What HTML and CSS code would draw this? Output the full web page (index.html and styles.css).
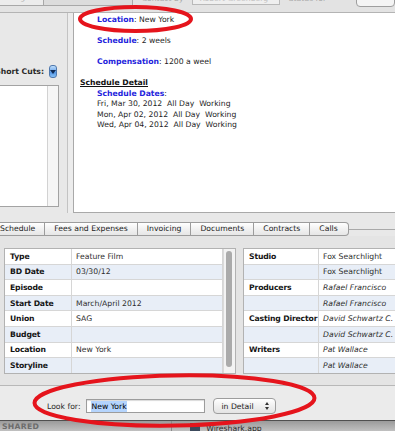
FILE: index.html
```html
<!DOCTYPE html>
<html lang="en">

<head>
    <meta charset="UTF-8">
    <meta name="viewport" content="width=device-width, initial-scale=1.0">
    <title>Job Detail</title>
    <link rel="stylesheet" href="styles.css">
</head>

<body>
    <div class="window">
        <div class="topbar">
            <div class="tb-seg">Budgets</div>
            <div class="tb-seg wide"></div>
            <div class="tb-label">Contact by</div>
            <div class="tb-field">Robert Greenberg</div>
            <div class="tb-label">Status for</div>
            <div class="tb-button"></div>
        </div>

        <div class="upper">
            <div class="sidebar">
                <div class="shortcuts">
                    <span>Short Cuts:</span>
                    <span class="popbtn"><i></i></span>
                </div>
                <div class="listbox">
                    <div class="list"></div>
                    <div class="vscroll"></div>
                </div>
            </div>
            <div class="splitter"></div>
            <div class="detail">
                <p class="item"><b>Location</b>: New York</p>
                <p class="item"><b>Schedule</b>: 2 weels</p>
                <p class="item last"><b>Compensation</b>: 1200 a weel</p>
                <p class="head">Schedule Detail</p>
                <p class="sub"><b>Schedule Dates</b>:</p>
                <p class="date">Fri, Mar 30, 2012  All Day  Working</p>
                <p class="date">Mon, Apr 02, 2012  All Day  Working</p>
                <p class="date">Wed, Apr 04, 2012  All Day  Working</p>
            </div>
        </div>

        <div class="tabs">
            <span class="tab first">Schedule</span>
            <span class="tab">Fees and Expenses</span>
            <span class="tab">Invoicing</span>
            <span class="tab">Documents</span>
            <span class="tab">Contracts</span>
            <span class="tab last">Calls</span>
            <span class="tabs-line"></span>
        </div>

        <div class="pane">
            <div class="grid left">
                <table>
                    <tr><th>Type</th><td>Feature Film</td></tr>
                    <tr><th>BD Date</th><td>03/30/12</td></tr>
                    <tr><th>Episode</th><td></td></tr>
                    <tr><th>Start Date</th><td>March/April 2012</td></tr>
                    <tr><th>Union</th><td>SAG</td></tr>
                    <tr><th>Budget</th><td></td></tr>
                    <tr><th>Location</th><td>New York</td></tr>
                    <tr><th>Storyline</th><td></td></tr>
                </table>
                <div class="scroll"><div class="thumb"></div></div>
            </div>
            <div class="grid right">
                <table>
                    <tr><th>Studio</th><td>Fox Searchlight</td></tr>
                    <tr><th></th><td>Fox Searchlight</td></tr>
                    <tr><th>Producers</th><td class="it">Rafael Francisco</td></tr>
                    <tr><th></th><td class="it">Rafael Francisco</td></tr>
                    <tr><th>Casting Director</th><td class="it">David Schwartz C.</td></tr>
                    <tr><th></th><td class="it">David Schwartz C.</td></tr>
                    <tr><th>Writers</th><td class="it">Pat Wallace</td></tr>
                    <tr><th></th><td class="it">Pat Wallace</td></tr>
                </table>
            </div>
        </div>

        <div class="findbar">
            <span class="find-label">Look for:</span>
            <span class="find-input"><span class="sel">New York</span></span>
            <span class="find-select">in Detail<i class="arrows"></i></span>
        </div>

        <div class="desk">
            <span class="desk-head">SHARED</span>
            <span class="desk-div"></span>
            <span class="desk-icon"></span>
            <span class="desk-name">Wireshark.app</span>
        </div>

        <svg class="marks" width="395" height="431" viewBox="0 0 395 431">
            <ellipse cx="135.5" cy="19" rx="55.5" ry="12" />
            <ellipse cx="174.5" cy="400.5" rx="140" ry="25" transform="rotate(-1 174.5 400.5)" stroke-width="5" />
        </svg>
    </div>
</body>

</html>
```

FILE: styles.css
```css
body {
    margin: 0px;
    font-family: "DejaVu Sans", sans-serif;
    font-size: 7.7px;
    color: #1e1e1e;
}

.window {
    position: relative;
    width: 395px;
    height: 431px;
    overflow: hidden;
    background-color: #e8e8e8;
}

/* top strip, mostly cut off */

.topbar {
    display: flex;
    align-items: flex-start;
    height: 12px;
    overflow: hidden;
    border-bottom: 1px solid #b4b4b4;
    background-color: #e3e3e3;
    white-space: nowrap;
}

.tb-seg {
    width: 48px;
    height: 14px;
    margin: -10px 0px 0px -2px;
    border: 1px solid #a8a8a8;
    background-color: #ececec;
    color: #b0b0b0;
    line-height: 14px;
    text-align: center;
}

.tb-seg.wide {
    width: 95px;
    margin-left: -1px;
    background-color: #dcdcdc;
}

.tb-label {
    margin: -6px 0px 0px 9px;
    color: #a9a9a9;
}

.tb-field {
    width: 94px;
    height: 14px;
    margin: -9px 0px 0px 9px;
    border: 1px solid #b9b9b9;
    background-color: #efefef;
    color: #c2c2c2;
    line-height: 14px;
    padding-left: 6px;
    box-sizing: border-box;
}

.tb-button {
    width: 40px;
    height: 14px;
    margin: -9px 0px 0px 30px;
    border: 1px solid #9e9e9e;
    border-radius: 4px;
    background-color: #f4f4f4;
}

/* upper part: sidebar + detail text */

.upper {
    display: flex;
    height: 200px;
}

.sidebar {
    width: 67px;
    overflow: hidden;
    border-right: 1px solid #c3c3c3;
}

.shortcuts {
    display: flex;
    justify-content: flex-end;
    align-items: center;
    gap: 5px;
    height: 13px;
    margin-top: 52px;
    padding-right: 10px;
    white-space: nowrap;
    font-weight: bold;
    color: #2a2a2a;
}

.popbtn {
    display: flex;
    justify-content: center;
    align-items: center;
    width: 10px;
    height: 11px;
    border: 1px solid #4f78ad;
    border-radius: 3px;
    background: linear-gradient(#bcdcfb, #6fa7ea 50%, #4a8fe2 51%, #87c0f5);
}

.popbtn i {
    width: 0px;
    height: 0px;
    border-left: 3px solid transparent;
    border-right: 3px solid transparent;
    border-top: 4px solid #0e2a55;
}

.listbox {
    display: flex;
    height: 120px;
    margin: 7px 8px 0px -2px;
    border: 1px solid #a3a3a3;
    background-color: #fff;
}

.listbox .list {
    flex: 1;
}

.listbox .vscroll {
    width: 10px;
    border-left: 1px solid #d2d2d2;
    background-color: #f6f6f6;
}

.splitter {
    width: 5px;
    background-color: #ececec;
}

.detail {
    flex: 1;
    padding: 2px 6px 0px 6px;
    border-left: 1px solid #a9a9a9;
    border-bottom: 1px solid #a9a9a9;
    background-color: #fff;
    line-height: 10.5px;
}

.detail p {
    margin: 0px;
    white-space: pre;
}

.detail b {
    color: #2424dc;
}

.detail .item,
.detail .sub,
.detail .date {
    padding-left: 17px;
}

.detail .item {
    margin-bottom: 10.5px;
}

.detail .head {
    font-weight: bold;
    text-decoration: underline;
    color: #111;
}

/* tab control */

.tabs {
    display: flex;
    align-items: center;
    height: 14px;
    margin-top: 9px;
}

.tab {
    height: 12px;
    padding: 0px 9px;
    border: 1px solid #9c9c9c;
    border-left: none;
    background: linear-gradient(#ffffff, #f1f1f1 50%, #e6e6e6);
    line-height: 12px;
    white-space: nowrap;
    color: #222;
}

.tab.first {
    margin-left: -9px;
}

.tab.last {
    padding-right: 10px;
    border-radius: 0px 4px 4px 0px;
}

.tabs-line {
    flex: 1;
    height: 1px;
    background-color: #a9a9a9;
}

/* tab pane with the two grids */

.pane {
    display: flex;
    gap: 7px;
    height: 149px;
    padding: 12px 0px 0px 4px;
    box-sizing: border-box;
    background-color: #e4e4e4;
}

.grid {
    display: flex;
    flex: none;
    align-self: flex-start;
    border: 1px solid #b2b2b2;
    background-color: #fff;
}

.grid.left {
    width: 230px;
}

.grid.right {
    width: 170px;
}

.grid table {
    flex: 1;
    border-collapse: collapse;
    table-layout: fixed;
}

.grid th,
.grid td {
    height: 14.6px;
    padding: 0px 0px 0px 4px;
    border: 1px solid #d6d6d6;
    border-top: none;
    text-align: left;
    white-space: nowrap;
    overflow: hidden;
}

.grid tr:last-child th,
.grid tr:last-child td {
    border-bottom: none;
}

.grid th {
    padding-left: 5px;
    border-left: none;
    font-weight: bold;
    letter-spacing: -0.15px;
    color: #151515;
}

.grid.left th {
    width: 61px;
}

.grid.right th {
    width: 69px;
}

.grid td {
    color: #2e2e2e;
}

.grid tr:nth-child(even) th,
.grid tr:nth-child(even) td {
    background-color: #e8eef7;
}

.grid td.it {
    font-style: italic;
}

.grid .scroll {
    width: 12px;
    padding: 2px 0px 0px 2px;
    box-sizing: border-box;
    border-left: 1px solid #dadada;
    background-color: #f3f3f3;
}

.grid .thumb {
    width: 6px;
    height: 116px;
    border-radius: 3px;
    background-color: #ababab;
}

/* find bar */

.findbar {
    display: flex;
    align-items: center;
    height: 35px;
    padding: 6px 0px 0px 47px;
    border-top: 1px solid #b8b8b8;
    box-sizing: border-box;
    background-color: #ebebeb;
}

.find-label {
    color: #2a2a2a;
}

.find-input {
    display: flex;
    align-items: center;
    width: 119px;
    height: 14px;
    margin-left: 6px;
    padding-left: 4px;
    box-sizing: border-box;
    border: 1px solid #9c9c9c;
    box-shadow: inset 0px 1px 1px rgba(0, 0, 0, 0.15);
    background-color: #fff;
}

.find-input .sel {
    background-color: #b4d4fd;
    line-height: 11px;
    color: #000;
}

.find-select {
    display: flex;
    align-items: center;
    width: 63px;
    height: 16px;
    margin-left: 8px;
    padding-left: 7px;
    box-sizing: border-box;
    border: 1px solid #9d9d9d;
    border-radius: 4px;
    background: linear-gradient(#ffffff, #f0f0f0 50%, #e3e3e3);
    color: #222;
}

.find-select .arrows {
    position: relative;
    width: 5px;
    height: 8px;
    margin-left: auto;
    margin-right: 5px;
}

.find-select .arrows::before,
.find-select .arrows::after {
    content: "";
    position: absolute;
    left: 0px;
    border-left: 2.5px solid transparent;
    border-right: 2.5px solid transparent;
}

.find-select .arrows::before {
    top: 0px;
    border-bottom: 3px solid #333;
}

.find-select .arrows::after {
    bottom: 0px;
    border-top: 3px solid #333;
}

/* desktop strip behind the window */

.desk {
    display: flex;
    align-items: flex-start;
    height: 11px;
    border-top: 1px solid #505050;
    background: linear-gradient(#9b9b9b, #c4c4c4);
    overflow: hidden;
}

.desk-head {
    margin: 1px 0px 0px 2px;
    font-weight: bold;
    color: #6c6c6c;
    letter-spacing: 0.3px;
}

.desk-div {
    width: 1px;
    height: 11px;
    margin-left: 132px;
    background-color: #8a8a8a;
}

.desk-icon {
    width: 10px;
    height: 9px;
    margin: 2px 0px 0px 18px;
    background-color: #3c4a5c;
}

.desk-name {
    margin: 3px 0px 0px 6px;
    color: #2b2b2b;
}

/* red annotation marks over the screenshot */

.marks {
    position: absolute;
    top: 0px;
    left: 0px;
    pointer-events: none;
}

.marks ellipse {
    fill: none;
    stroke: #e5141c;
    stroke-width: 4;
}
```
